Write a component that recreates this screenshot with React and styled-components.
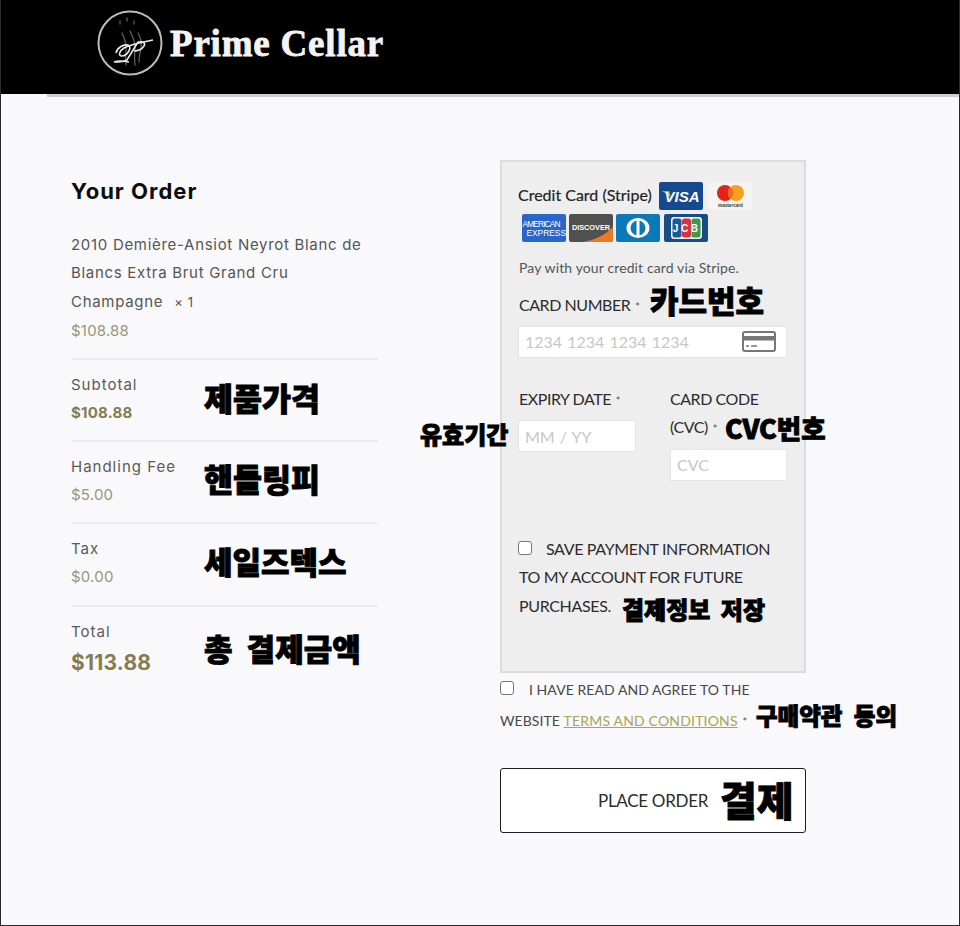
import React from "react";
import styled, { createGlobalStyle } from "styled-components";

const Global = createGlobalStyle`
  html, body { margin: 0; padding: 0; background: #f9f9fb; }
  * { box-sizing: border-box; }
`;
const Page = styled.div`
  position: relative; width: 960px; height: 926px; overflow: hidden;
  background: #f9f9fb; border: 1px solid #2a2a2a; border-top: 0;
`;
const Header = styled.header`
  height: 94px; background: #000; display: flex; align-items: flex-start; gap: 6px;
  padding: 9px 0 0 96px; margin-left: -1px;
`;
const LogoText = styled.div`
  font-family: "Liberation Serif", serif; font-weight: 700; font-size: 37px; line-height: 1;
  color: #f4f4f4; margin-top: 16px; letter-spacing: 0.8px; -webkit-text-stroke: 0.8px #f4f4f4;
`;
const HeaderRule = styled.div`
  height: 3px; margin-left: 46px; background: #cfcfcf;
`;
const Main = styled.main`
  display: flex; padding: 63px 0 0 70px;
`;
const OrderCol = styled.section`
  width: 307px; margin-right: 122px; padding-top: 17px;
  font-family: Inter, "Liberation Sans", sans-serif;
`;
const Title = styled.h2`
  margin: 0 0 26px; font-size: 22px; line-height: 28px; font-weight: 700; color: #0c0c0c;
  letter-spacing: 1px;
`;
const ProductName = styled.div`
  font-size: 15px; line-height: 28.4px; color: #555; letter-spacing: 0.7px;
`;
const Qty = styled.span`font-size: 13px; margin-left: 6px;`;
const ProductPrice = styled.div`
  font-size: 15px; line-height: 30px; color: #9a9678; letter-spacing: 0.2px; padding-bottom: 12px;
`;
const Row = styled.div`
  border-top: 2px solid #ececef; height: ${(p) => p.$h || 82}px; padding-top: 11px;
`;
const RowLabel = styled.div`
  font-size: 15px; line-height: 28px; color: #5a5a5a; letter-spacing: 1px;
`;
const RowValue = styled.div`
  font-size: ${(p) => p.$size || 15}px; line-height: ${(p) => (p.$size ? 34 : 28)}px;
  font-weight: ${(p) => (p.$bold ? 700 : 400)};
  color: ${(p) => (p.$bold ? "#867c4f" : "#9a9678")}; letter-spacing: 0.2px;
`;
const PayCol = styled.section`
  width: 306px; font-family: Lato, "Liberation Sans", sans-serif;
`;
const CardBox = styled.div`
  height: 513px; background: #eeeeee; border: 2px solid #dcdcdc; padding: 20px 16px 0;
`;
const MethodHead = styled.div`
  display: flex; flex-wrap: wrap; align-items: flex-start; width: 250px; row-gap: 2px;
`;
const MethodName = styled.span`
  font-size: 16px; line-height: 26px; color: #1f1f1f; -webkit-text-stroke: 0.2px #1f1f1f;
  margin-right: 7px;
`;
const CardLogo = styled.svg`
  display: block; width: 44px; height: 28px; margin-right: ${(p) => p.$mr ?? 4}px;
  margin-left: ${(p) => p.$ml || 0}px;
`;
const LogoBreak = styled.div`flex-basis: 100%; height: 0;`;
const Hint = styled.p`
  margin: 15px 0 0; padding-left: 1px; font-size: 14px; line-height: 22px; color: #555; letter-spacing: 0.12px;
`;
const FieldLabel = styled.label`
  display: block; font-size: 16px; line-height: 28.5px; color: #2c2c2c; letter-spacing: -0.45px;
  margin-top: ${(p) => p.$mt || 0}px; padding-left: ${(p) => (p.$inset ? 1 : 0)}px;
`;
const Star = styled.span`font-size: 11px; color: #555; margin-left: 2px; letter-spacing: 0;`;
const Input = styled.div`
  height: 32px; width: ${(p) => p.$w}px; background: #fff; border: 1px solid #e6e6e6;
  display: flex; align-items: center; justify-content: space-between; padding: 0 10px 0 6px;
  font-size: 16px; word-spacing: 1px; color: #c8c8c8; margin-top: ${(p) => p.$mt || 0}px;
`;
const CardRow = styled.div`display: flex; margin-top: 27px; height: 150px;`;
const CardCell = styled.div`width: ${(p) => p.$w}px;`;
const Save = styled.div`
  font-size: 16px; line-height: 28.6px; color: #2c2c2c; letter-spacing: -0.35px; padding-left: 1px;
`;
const Box = styled.span`
  display: inline-block; width: 14px; height: 14px; border: 1px solid #767676; border-radius: 3px;
  background: #fff; vertical-align: 0; margin-right: ${(p) => p.$mr}px; margin-left: ${(p) => p.$ml || 0}px;
`;
const Terms = styled.div`
  margin-top: 1px; font-size: 14px; line-height: 31px; color: #474747; letter-spacing: 0.06px;
`;
const TermsLink = styled.a`color: #a8a456; text-decoration: underline; letter-spacing: 0.18px;`;
const PlaceOrder = styled.button`
  display: block; width: 306px; height: 65px; margin-top: 31px; background: #fff;
  border: 1px solid #1c1c1c; border-radius: 3px; padding: 0 0 0 97px; text-align: left;
  font-family: inherit; font-size: 17px; color: #2c2c2c; letter-spacing: -0.3px;
`;
const Note = styled.span`
  position: absolute; left: ${(p) => p.$x}px; top: ${(p) => p.$y}px; white-space: nowrap;
  font-family: "Noto Sans CJK KR", sans-serif; font-weight: 900; color: #000; line-height: 1;
  font-size: ${(p) => p.$s}px; letter-spacing: ${(p) => p.$ls ?? 0}px;
  word-spacing: ${(p) => p.$ws ?? 0}px; -webkit-text-stroke: 0.9px #000;
`;

const Crest = () => (
  <svg width="68" height="68" viewBox="0 0 68 68" aria-hidden="true">
    <circle cx="34" cy="34" r="31.5" fill="none" stroke="#bcbcbc" strokeWidth="2" />
    <g fill="none" stroke="#5f5f5f" strokeWidth="1.3" strokeLinecap="round">
      <path d="M24 12v3M31 9v3M38 12v3" />
      <path d="M26 24c3 6 4 9 4 15s-1 10 0 17" />
      <path d="M34 22c3 6 5 10 5 16s-1 12 0 18" />
      <path d="M42 24c3 6 4 9 3 15s-2 8-2 14" />
    </g>
    <g fill="none" stroke="#e8e8e8" strokeWidth="1.6">
      <path d="M20 44c1-5 7-9 12-8 5 2-1 11-6 11-4 0-3-5 2-8 7-4 20-6 29-8" />
      <path d="M42 33L31 51c-3 2-8 2-13 2 5-2 10-1 15 0" />
      <path d="M42 33c5-1 8 1 6 4-2 3-6 5-10 5" />
    </g>
  </svg>
);

const Visa = () => (
  <CardLogo $mr={5} viewBox="0 0 44 28" aria-hidden="true">
    <rect width="44" height="28" rx="2" fill="#164a8f" />
    <path d="M3 9h7l2 6z" fill="#c9a85a" />
    <text x="23" y="20" textAnchor="middle" fontFamily="Liberation Sans" fontStyle="italic" fontWeight="700" fontSize="15" fill="#fff">VISA</text>
  </CardLogo>
);
const Master = () => (
  <CardLogo $mr={0} viewBox="0 0 44 28" aria-hidden="true">
    <rect width="44" height="28" rx="2" fill="#f5f4f1" />
    <circle cx="17" cy="11" r="8" fill="#e2231a" />
    <circle cx="28" cy="11" r="8" fill="#f4a21c" />
    <path d="M22.5 5a8 8 0 0 1 0 12 8 8 0 0 1 0-12z" fill="#f26a1d" />
    <text x="22.5" y="24.5" textAnchor="middle" fontFamily="Liberation Sans" fontWeight="700" fontSize="4.6" fill="#333">mastercard</text>
  </CardLogo>
);
const Amex = () => (
  <CardLogo $ml={4} $mr={3} viewBox="0 0 44 28" aria-hidden="true">
    <rect width="44" height="28" rx="2" fill="#2a66c8" />
    <text x="0.5" y="12.5" fontFamily="Liberation Sans" fontSize="8.4" fill="#fff" textLength="38">AMERICAN</text>
    <text x="44" y="22" textAnchor="end" fontFamily="Liberation Sans" fontSize="8.4" fill="#fff">EXPRESS</text>
  </CardLogo>
);
const Discover = () => (
  <CardLogo $mr={3} viewBox="0 0 44 28" aria-hidden="true">
    <rect width="44" height="28" rx="2" fill="#50504f" />
    <path d="M14 28c12-2 22-7 30-15v13a2 2 0 0 1-2 2z" fill="#ed7a23" />
    <text x="22" y="16" textAnchor="middle" fontFamily="Liberation Sans" fontWeight="700" fontSize="7.3" fill="#fff">DISCOVER</text>
  </CardLogo>
);
const Diners = () => (
  <CardLogo $mr={4} viewBox="0 0 44 28" aria-hidden="true">
    <rect width="44" height="28" rx="2" fill="#0b79b8" />
    <ellipse cx="22" cy="14" rx="11.5" ry="10" fill="#fff" />
    <ellipse cx="22" cy="14" rx="7.5" ry="7.5" fill="#0b79b8" />
    <rect x="20.5" y="6" width="3" height="16" fill="#fff" />
  </CardLogo>
);
const Jcb = () => (
  <CardLogo $mr={0} viewBox="0 0 44 28" aria-hidden="true">
    <rect width="44" height="28" rx="2" fill="#174c84" />
    <rect x="7" y="3" width="31" height="22" rx="3" fill="#f2f2f2" />
    <rect x="8.5" y="4.5" width="9" height="19" rx="2.5" fill="#1b5a9c" />
    <rect x="18" y="4.5" width="9" height="19" rx="2.5" fill="#d8303f" />
    <rect x="27.5" y="4.5" width="9" height="19" rx="2.5" fill="#3a9a4c" />
    <text x="22.7" y="18" textAnchor="middle" fontFamily="Liberation Sans" fontWeight="700" fontSize="10" letterSpacing="2.6" fill="#fff">JCB</text>
  </CardLogo>
);
const CardIcon = () => (
  <svg width="34" height="21" viewBox="0 0 34 21" aria-hidden="true">
    <rect x="1" y="1" width="32" height="19" rx="2" fill="#fff" stroke="#777" strokeWidth="2" />
    <rect x="1" y="5" width="32" height="4.5" fill="#777" />
    <path d="M4 15h3M9 15h6" stroke="#777" strokeWidth="1.5" />
  </svg>
);

export default function App() {
  return (
    <>
      <Global />
      <Page>
        <Header>
          <Crest />
          <LogoText>Prime Cellar</LogoText>
        </Header>
        <HeaderRule />
        <Main>
          <OrderCol>
            <Title>Your Order</Title>
            <ProductName>
              2010 Demière-Ansiot Neyrot Blanc de Blancs Extra Brut Grand Cru Champagne <Qty>× 1</Qty>
            </ProductName>
            <ProductPrice>$108.88</ProductPrice>
            <Row>
              <RowLabel>Subtotal</RowLabel>
              <RowValue $bold>$108.88</RowValue>
            </Row>
            <Row>
              <RowLabel>Handling Fee</RowLabel>
              <RowValue>$5.00</RowValue>
            </Row>
            <Row $h={83}>
              <RowLabel>Tax</RowLabel>
              <RowValue>$0.00</RowValue>
            </Row>
            <Row>
              <RowLabel>Total</RowLabel>
              <RowValue $bold $size={21}>$113.88</RowValue>
            </Row>
          </OrderCol>
          <PayCol>
            <CardBox>
              <MethodHead>
                <MethodName>Credit Card (Stripe)</MethodName>
                <Visa />
                <Master />
                <LogoBreak />
                <Amex />
                <Discover />
                <Diners />
                <Jcb />
              </MethodHead>
              <Hint>Pay with your credit card via Stripe.</Hint>
              <FieldLabel as="div" $mt={12} $inset>CARD NUMBER<Star> *</Star></FieldLabel>
              <Input $w={269} $mt={4}>1234 1234 1234 1234<CardIcon /></Input>
              <CardRow>
                <CardCell $w={152}>
                  <FieldLabel $inset>EXPIRY DATE<Star> *</Star></FieldLabel>
                  <Input $w={118} $mt={5}>MM / YY</Input>
                </CardCell>
                <CardCell $w={118}>
                  <FieldLabel>CARD CODE (CVC)<Star> *</Star></FieldLabel>
                  <Input $w={117} $mt={5}>CVC</Input>
                </CardCell>
              </CardRow>
              <Save>
                <Box $mr={14} $ml={-1} />SAVE PAYMENT INFORMATION TO MY ACCOUNT FOR FUTURE PURCHASES.
              </Save>
            </CardBox>
            <Terms>
              <Box $mr={15} />I HAVE READ AND AGREE TO THE WEBSITE <TermsLink href="#">TERMS AND CONDITIONS</TermsLink><Star> *</Star>
            </Terms>
            <PlaceOrder>PLACE ORDER</PlaceOrder>
          </PayCol>
        </Main>
        <Note $x={649} $y={284} $s={31}>카드번호</Note>
        <Note $x={203} $y={382} $s={31.5}>제품가격</Note>
        <Note $x={203} $y={463} $s={31.5}>핸들링피</Note>
        <Note $x={203} $y={545} $s={31}>세일즈텍스</Note>
        <Note $x={203} $y={632} $s={31} $ws={7}>총 결제금액</Note>
        <Note $x={419} $y={422} $s={24}>유효기간</Note>
        <Note $x={724} $y={415} $s={26.5}>CVC번호</Note>
        <Note $x={621} $y={597} $s={24} $ws={5}>결제정보 저장</Note>
        <Note $x={755} $y={704} $s={23.5} $ws={6}>구매약관 동의</Note>
        <Note $x={719} $y={779} $s={40}>결제</Note>
      </Page>
    </>
  );
}
